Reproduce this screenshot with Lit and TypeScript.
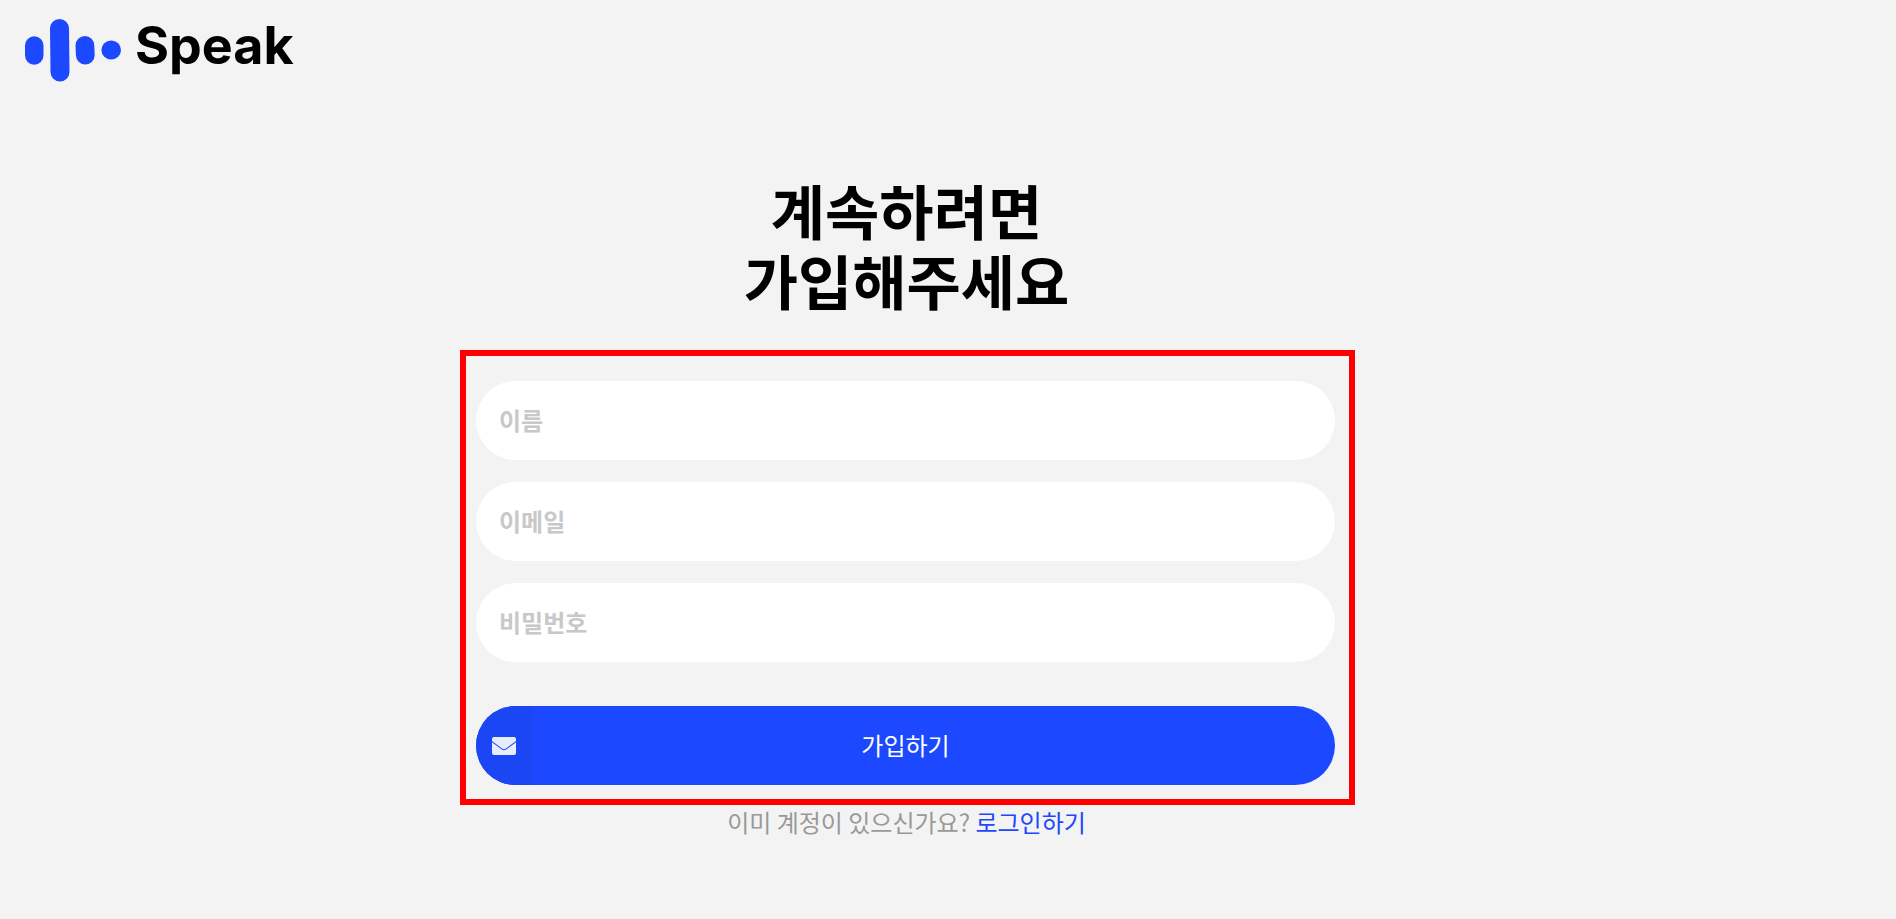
import { LitElement, html, css } from "lit";
import { customElement } from "lit/decorators.js";

const FIELDS = [
  { name: "name", type: "text", label: "이름", autocomplete: "name" },
  { name: "email", type: "email", label: "이메일", autocomplete: "email" },
  { name: "password", type: "password", label: "비밀번호", autocomplete: "new-password" },
];

@customElement("speak-logo")
class SpeakLogo extends LitElement {
  static styles = css`
    :host {
      display: block;
    }
    .logo {
      display: inline-flex;
      align-items: flex-start;
      gap: 14px;
      color: #000;
      text-decoration: none;
    }
    .mark {
      width: 96px;
      height: 64px;
      fill: #1c49ff;
    }
    .word {
      font: 700 52px/56px Inter, "Open Sans", sans-serif;
    }
  `;

  render() {
    return html`
      <a class="logo" href="#">
        <svg class="mark" viewBox="0 0 96 64" aria-hidden="true">
          <path d="M0 27.5a9.25 9.25 0 0 1 18.5 0v10a9.25 9.25 0 0 1-18.5 0z" />
          <path d="M25 10.500a9.500 9.500 0 0 1 19 0l.5 43.500a9.500 9.500 0 0 1-19 0z" />
          <path d="M50.500 27.500a9.400 9.400 0 0 1 18.800 0l.4 9.500a9.400 9.400 0 0 1-18.800 0z" />
          <ellipse cx="86.200" cy="32" rx="9.800" ry="9.500" />
        </svg>
        <span class="word">Speak</span>
      </a>
    `;
  }
}

@customElement("app-root")
class AppRoot extends LitElement {
  static styles = css`
    :host {
      display: block;
      box-sizing: border-box;
      min-height: 100vh;
      background: #f3f3f3;
      font-family: "Noto Sans CJK KR", sans-serif;
      font-size: 24px;
      line-height: 34px;
    }
    .header {
      padding: 18px 25px;
    }
    .main {
      display: flex;
      justify-content: center;
      padding: 68px 81px 48px 0;
    }
    .signup {
      width: 100%;
      max-width: 895px;
    }
    .title {
      margin: 0 0 35px;
      padding: 0 18px 0 16px;
      font-size: 59px;
      line-height: 70px;
      font-weight: 700;
      text-align: center;
      color: #000;
    }
    .form {
      display: flex;
      flex-direction: column;
      gap: 22px;
      border: 6px solid #f00;
      padding: 25px 14px 14px 10px;
    }
    .field {
      display: flex;
    }
    .input {
      flex: 1;
      min-width: 0;
      height: 79px;
      box-sizing: border-box;
      border: 0;
      border-radius: 40px;
      padding: 0 23px 2px;
      background: #fff;
      color: #000;
      font: inherit;
      font-weight: 700;
    }
    .input::placeholder {
      color: #c8c8c8;
      opacity: 1;
    }
    .submit {
      display: grid;
      grid-template-columns: 56px 1fr 56px;
      align-items: stretch;
      height: 79px;
      margin-top: 22px;
      padding: 0;
      border: 0;
      border-radius: 40px;
      overflow: hidden;
      background: #1c49ff;
      color: #fff;
      font: inherit;
      cursor: pointer;
    }
    .badge {
      display: flex;
      align-items: center;
      justify-content: center;
      background: #1b46f3;
    }
    .mail {
      width: 24px;
      height: 18px;
    }
    .caption {
      align-self: center;
      padding-bottom: 2px;
    }
    .footer {
      margin: 0;
      padding: 0 18px 0 16px;
      text-align: center;
      color: #999;
    }
    .link {
      color: #1c49ff;
      text-decoration: none;
    }
  `;

  render() {
    return html`
      <header class="header"><speak-logo></speak-logo></header>
      <main class="main">
        <section class="signup">
          <h1 class="title">계속하려면<br />가입해주세요</h1>
          <form class="form" @submit=${(e: Event) => e.preventDefault()}>
            ${FIELDS.map(
              (f) => html`
                <label class="field" for=${f.name}>
                  <input
                    class="input"
                    id=${f.name}
                    name=${f.name}
                    type=${f.type}
                    placeholder=${f.label}
                    aria-label=${f.label}
                    autocomplete=${f.autocomplete}
                  />
                </label>
              `
            )}
            <button class="submit" type="submit">
              <span class="badge">
                <svg class="mail" viewBox="0 0 24 18" aria-hidden="true">
                  <path
                    fill="#e8ecff"
                    d="M2 0h20a2 2 0 0 1 2 2v2l-10 7.500a3.300 3.300 0 0 1-4 0L0 4V2a2 2 0 0 1 2-2z"
                  />
                  <path
                    fill="#e8ecff"
                    d="M0 5.200l9.500 7.100a4.200 4.200 0 0 0 5 0L24 5.200V16a2 2 0 0 1-2 2H2a2 2 0 0 1-2-2z"
                  />
                </svg>
              </span>
              <span class="caption">가입하기</span>
            </button>
          </form>
          <p class="footer">이미 계정이 있으신가요? <a class="link" href="#">로그인하기</a></p>
        </section>
      </main>
    `;
  }
}
